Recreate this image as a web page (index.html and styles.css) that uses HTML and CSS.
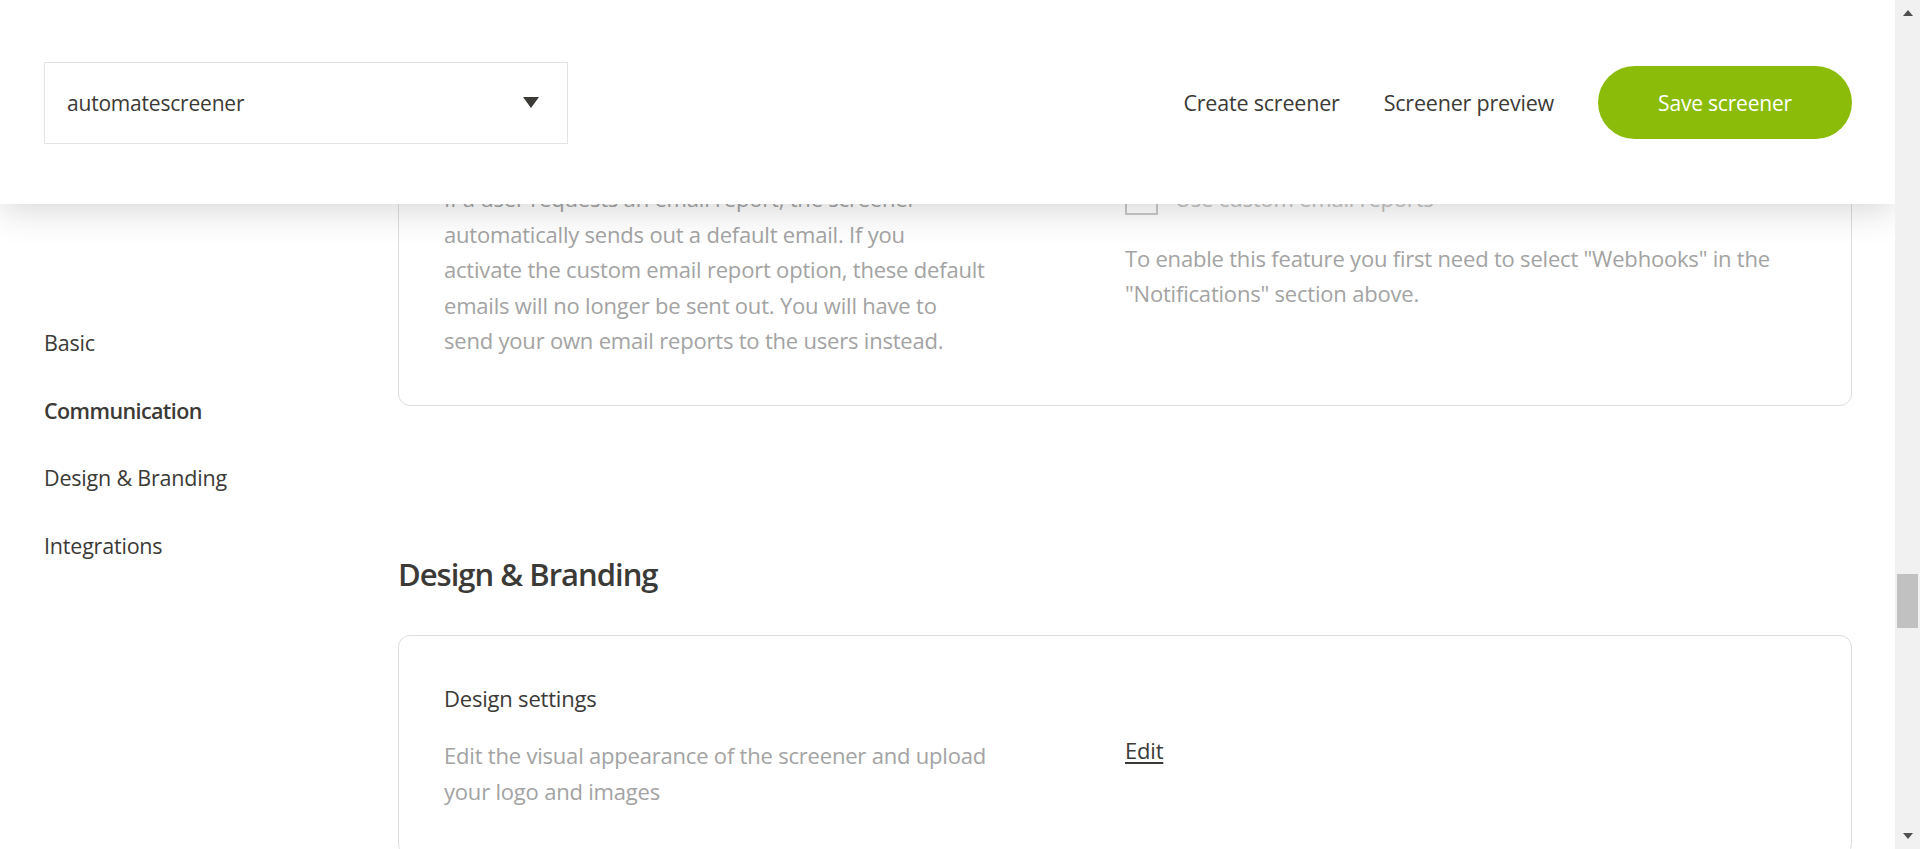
FILE: index.html
```html
<!DOCTYPE html>
<html lang="en">
<head>
<meta charset="utf-8">
<title>Screener settings</title>
<link rel="stylesheet" href="styles.css">
</head>
<body>
<div class="app">
  <div class="viewport">
    <header class="topbar">
      <div class="select">
        <span class="select-value">automatescreener</span>
        <span class="select-caret"></span>
      </div>
      <nav class="topnav">
        <a class="topnav-link" href="#">Create screener</a>
        <a class="topnav-link" href="#">Screener preview</a>
        <button class="btn-save" type="button">Save screener</button>
      </nav>
    </header>

    <div class="layout">
      <aside class="sidebar">
        <a class="side-link" href="#">Basic</a>
        <a class="side-link is-active" href="#">Communication</a>
        <a class="side-link" href="#">Design &amp; Branding</a>
        <a class="side-link" href="#">Integrations</a>
      </aside>

      <main class="main">
        <div class="main-inner">
          <div class="card">
            <div class="setting">
              <div class="setting-title">Notifications</div>
              <div class="setting-desc">Choose how you want to be notified when a<br>user completes the screener.</div>
              <div class="setting-control">
                <label class="check"><span class="check-box"></span><span class="check-label">Email</span></label>
              </div>
            </div>
            <div class="setting">
              <div class="setting-title">Custom email reports</div>
              <div class="setting-desc">If a user requests an email report, the screener<br>automatically sends out a default email. If you<br>activate the custom email report option, these default<br>emails will no longer be sent out. You will have to<br>send your own email reports to the users instead.</div>
              <div class="setting-control">
                <label class="check is-disabled"><span class="check-box"></span><span class="check-label">Use custom email reports</span></label>
                <p class="setting-note">To enable this feature you first need to select "Webhooks" in the "Notifications" section above.</p>
              </div>
            </div>
          </div>

          <h2 class="section-title">Design &amp; Branding</h2>

          <div class="card">
            <div class="setting">
              <div class="setting-title">Design settings</div>
              <div class="setting-desc">Edit the visual appearance of the screener and upload<br>your logo and images</div>
              <div class="setting-control">
                <a class="edit-link" href="#">Edit</a>
              </div>
            </div>
          </div>
        </div>
      </main>
    </div>
  </div>

  <div class="scrollbar">
    <span class="sb-arrow sb-up"></span>
    <div class="sb-track"><span class="sb-thumb"></span></div>
    <span class="sb-arrow sb-down"></span>
  </div>
</div>
</body>
</html>
```

FILE: styles.css
```css
* { box-sizing: border-box; }

html, body {
  margin: 0;
  height: 849px;
  overflow: hidden;
  background: #fff;
}

body {
  font-family: "Open Sans", "Noto Sans", sans-serif;
  font-size: 22px;
  letter-spacing: -0.2px;
  color: #3b3a36;
}

a { color: inherit; text-decoration: none; }

.app {
  display: flex;
  height: 849px;
}

.viewport {
  position: relative;
  flex: 1;
  overflow: hidden;
}

/* ---------- top bar (overlays scrolled content) ---------- */
.topbar {
  position: absolute;
  top: 0;
  left: 0;
  right: 0;
  z-index: 5;
  height: 204px;
  display: flex;
  align-items: center;
  justify-content: space-between;
  padding: 1px 43px 0 44px;
  background: #fff;
  box-shadow: 0 6px 34px rgba(0, 0, 0, 0.16);
}

.select {
  width: 524px;
  height: 82px;
  display: flex;
  align-items: center;
  justify-content: space-between;
  padding: 0 28px 0 22px;
  border: 1px solid #e3e3e3;
  font-size: 21px;
}

.select-caret {
  width: 0;
  height: 0;
  border-left: 8px solid transparent;
  border-right: 8px solid transparent;
  border-top: 11px solid #3b3a36;
}

.topnav {
  display: flex;
  align-items: center;
  gap: 44px;
}

.topnav-link {
  font-size: 21.5px;
}

.btn-save {
  width: 254px;
  height: 73px;
  border: 0;
  border-radius: 37px;
  background: #8bbc0a;
  color: #fff;
  font-family: inherit;
  font-size: 21px;
  letter-spacing: -0.2px;
  cursor: pointer;
}

/* ---------- layout ---------- */
.layout {
  display: flex;
  height: 100%;
}

.sidebar {
  width: 398px;
  flex: none;
  display: flex;
  flex-direction: column;
  gap: 32.2px;
  padding: 325px 0 0 44px;
}

.side-link {
  line-height: 35.5px;
  font-size: 21.5px;
}

.side-link.is-active {
  font-weight: 600;
  letter-spacing: -0.6px;
}

.main {
  flex: 1;
  overflow: hidden;
  padding-right: 43px;
}

.main-inner {
  margin-top: -110.5px;
}

/* ---------- cards ---------- */
.card {
  border: 1px solid #dddddd;
  border-radius: 12px;
  padding: 45.5px 45px 46px;
  display: flex;
  flex-direction: column;
  gap: 60px;
}

.setting {
  display: grid;
  grid-template-columns: 1fr 1fr;
  grid-template-rows: auto auto;
}

.setting-title {
  grid-column: 1;
  grid-row: 1;
  line-height: 35.5px;
  color: #3b3a36;
}

.setting-desc {
  grid-column: 1;
  grid-row: 2;
  margin-top: 21.5px;
  line-height: 35.5px;
  color: #a3a3a3;
  white-space: nowrap;
}

.setting-control {
  grid-column: 2;
  grid-row: 2;
  margin-top: 21.5px;
  display: flex;
  flex-direction: column;
  align-items: flex-start;
}

.check {
  display: flex;
  align-items: center;
  gap: 17px;
  line-height: 35.5px;
}

.check-box {
  width: 33px;
  height: 33px;
  border: 2px solid #c9c9c9;
  background: #fff;
}

.check.is-disabled .check-label {
  color: #c4c4c4;
}

.setting-note {
  margin: 24px 0 0;
  max-width: 660px;
  line-height: 35.5px;
  color: #a3a3a3;
}

.edit-link {
  line-height: 35.5px;
  text-decoration: underline;
  text-underline-offset: 3px;
  margin-top: -5px;
}

.section-title {
  margin: 146px 0 39px;
  font-size: 31px;
  font-weight: 600;
  line-height: 44px;
  letter-spacing: -1px;
  color: #3b3a36;
}

/* ---------- scrollbar ---------- */
.scrollbar {
  width: 25px;
  flex: none;
  display: flex;
  flex-direction: column;
  align-items: center;
  background: #f1f1f1;
}

.sb-arrow {
  width: 0;
  height: 0;
  border-left: 5px solid transparent;
  border-right: 5px solid transparent;
}

.sb-up {
  margin-top: 10px;
  border-bottom: 6px solid #505050;
}

.sb-down {
  margin-bottom: 10px;
  border-top: 6px solid #505050;
}

.sb-track {
  flex: 1;
  width: 100%;
  padding-top: 558px;
  display: flex;
  justify-content: center;
}

.sb-thumb {
  width: 21px;
  height: 54px;
  background: #c1c1c1;
}
```
